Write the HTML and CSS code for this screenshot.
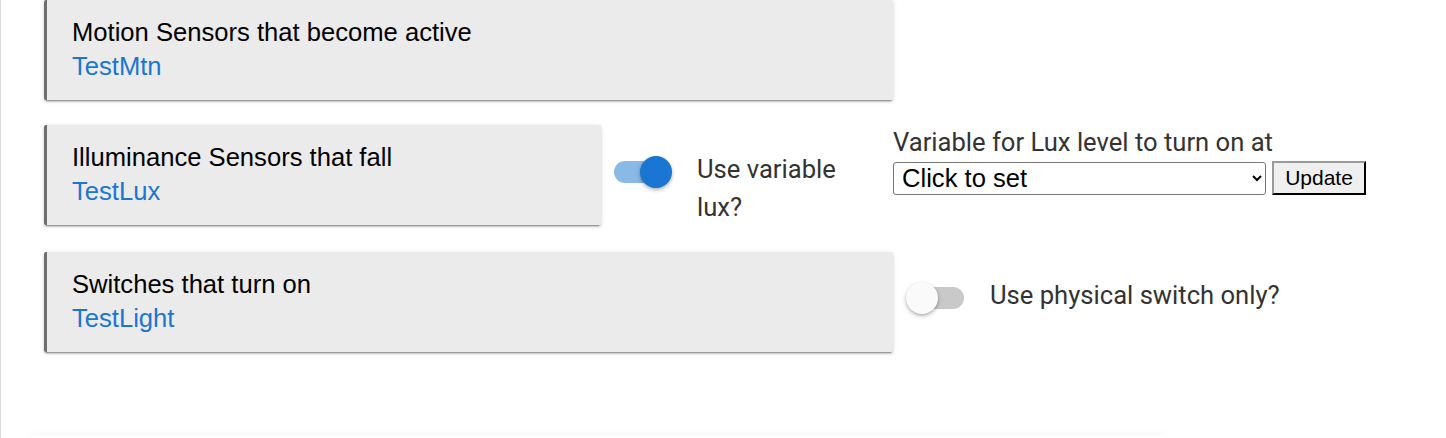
FILE: index.html
```html
<!DOCTYPE html>
<html lang="en">
<head>
  <meta charset="UTF-8" />
  <title>Rule settings</title>
  <link rel="stylesheet" href="styles.css">
</head>
<body>
  <div class="page">

    <div class="row">
      <div class="card wide">
        <div class="card-title">Motion Sensors that become active</div>
        <a class="card-link" href="#">TestMtn</a>
      </div>
    </div>

    <div class="row">
      <div class="card narrow">
        <div class="card-title">Illuminance Sensors that fall</div>
        <a class="card-link" href="#">TestLux</a>
      </div>
      <div class="toggle-wrap lux-toggle">
        <div class="switch on"><span class="track"></span><span class="thumb"></span></div>
        <span class="toggle-label lux-label">Use variable lux?</span>
      </div>
      <div class="var-box">
        <div class="var-title">Variable for Lux level to turn on at</div>
        <div class="var-controls">
          <select class="var-select">
            <option>Click to set</option>
          </select>
          <button class="update-btn">Update</button>
        </div>
      </div>
    </div>

    <div class="row last">
      <div class="card wide">
        <div class="card-title">Switches that turn on</div>
        <a class="card-link" href="#">TestLight</a>
      </div>
      <div class="toggle-wrap phys-toggle">
        <div class="switch"><span class="track"></span><span class="thumb"></span></div>
        <span class="toggle-label">Use physical switch only?</span>
      </div>
    </div>

    <div class="next-card"></div>
  </div>
</body>
</html>
```

FILE: styles.css
```css
html, body {
  margin: 0;
  background: #fff;
  overflow: hidden;
}

.page {
  border-left: 1px solid #dcdcdc;
  height: 100vh;
  box-sizing: border-box;
  padding-left: 43px;
  display: flex;
  flex-direction: column;
  gap: 25px;
}

.row {
  display: flex;
  align-items: flex-start;
}

.row.last {
  margin-top: 1px;
}

.card {
  box-sizing: border-box;
  height: 100px;
  background: #ebebeb;
  border-left: 3px solid #6e6e6e;
  border-radius: 2px;
  padding: 15px 0 0 25px;
  font-family: "Liberation Sans", Arial, sans-serif;
  font-size: 25.6px;
  line-height: 34px;
  box-shadow: 0 2px 2px rgba(0, 0, 0, 0.14), 0 3px 1px -2px rgba(0, 0, 0, 0.25), 0 1px 5px rgba(0, 0, 0, 0.12);
}

.card.wide {
  width: 849px;
}

.card.narrow {
  width: 557px;
}

.card-title {
  color: #000;
}

.card-link {
  color: #1a76d2;
  text-decoration: none;
}

.toggle-wrap {
  display: flex;
  align-items: flex-start;
  font-family: Roboto, sans-serif;
  color: #333;
}

.switch {
  position: relative;
  width: 58px;
  height: 32px;
  flex: none;
}

.switch .track {
  position: absolute;
  left: 12px;
  top: 5px;
  width: 46px;
  height: 22px;
  border-radius: 11px;
  background: #c9c9c9;
}

.switch .thumb {
  position: absolute;
  left: 0;
  top: 0;
  width: 32px;
  height: 32px;
  border-radius: 50%;
  background: #fafafa;
  box-shadow: 0 2px 4px rgba(0, 0, 0, 0.25), 0 1px 2px rgba(0, 0, 0, 0.12);
}

.switch.on .track {
  left: 0;
  background: #89b9e4;
}

.switch.on .thumb {
  left: 26px;
  background: #1a76d2;
}

.toggle-label {
  font-size: 25.6px;
  line-height: 38px;
}

.lux-toggle {
  margin-left: 13px;
  margin-top: 31px;
}

.lux-label {
  width: 150px;
  margin-left: 25px;
  margin-top: -6px;
}

.phys-toggle {
  margin-left: 13px;
  margin-top: 30px;
}

.phys-toggle .toggle-label {
  margin-left: 26px;
  margin-top: -6px;
}

.var-box {
  margin-left: 46px;
  font-family: Roboto, sans-serif;
}

.var-title {
  color: #333;
  font-size: 25.6px;
  line-height: 34px;
}

.var-controls {
  display: flex;
  align-items: center;
  gap: 6px;
  margin-top: 2px;
}

.var-select {
  width: 373px;
  height: 33px;
  font-family: "Liberation Sans", Arial, sans-serif;
  font-size: 25.6px;
  color: #000;
  background: #fff;
  border: 1px solid #767676;
  border-radius: 3px;
  padding: 0 4px;
}

.update-btn {
  height: 34px;
  width: 94px;
  font-family: "Liberation Sans", Arial, sans-serif;
  font-size: 21px;
  color: #000;
  background: #efefef;
  border: 2px outset #767676;
  border-color: #9a9a9a #2a2a2a #2a2a2a #9a9a9a;
  padding: 0;
}

.next-card {
  margin-left: -13px;
  margin-top: 58px;
  width: 1135px;
  height: 40px;
  background: #fff;
  box-shadow: 0 -1px 6px rgba(0, 0, 0, 0.06);
}
```
